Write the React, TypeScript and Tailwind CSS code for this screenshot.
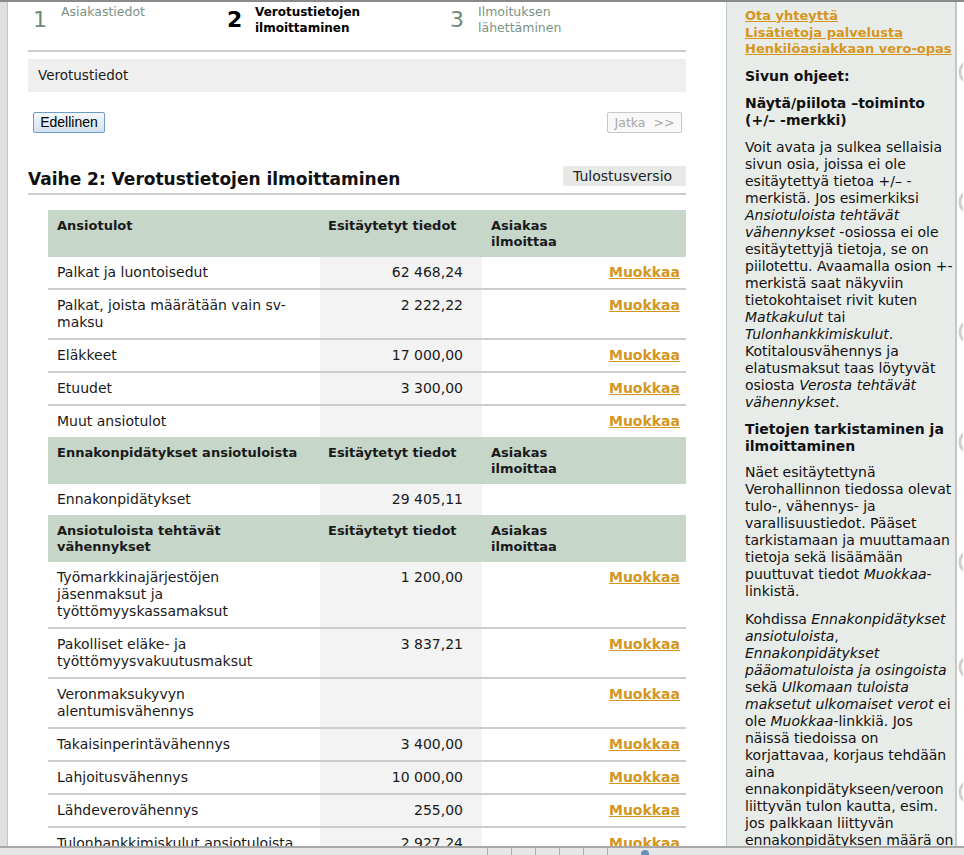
import React from "react";

type Row = { label: string; pre?: string; edit?: boolean };
type Section = { title: string; rows: Row[] };

const sections: Section[] = [
  {
    title: "Ansiotulot",
    rows: [
      { label: "Palkat ja luontoisedut", pre: "62 468,24", edit: true },
      { label: "Palkat, joista määrätään vain sv-maksu", pre: "2 222,22", edit: true },
      { label: "Eläkkeet", pre: "17 000,00", edit: true },
      { label: "Etuudet", pre: "3 300,00", edit: true },
      { label: "Muut ansiotulot", edit: true },
    ],
  },
  {
    title: "Ennakonpidätykset ansiotuloista",
    rows: [{ label: "Ennakonpidätykset", pre: "29 405,11" }],
  },
  {
    title: "Ansiotuloista tehtävät vähennykset",
    rows: [
      { label: "Työmarkkinajärjestöjen jäsenmaksut ja työttömyyskassamaksut", pre: "1 200,00", edit: true },
      { label: "Pakolliset eläke- ja työttömyysvakuutusmaksut", pre: "3 837,21", edit: true },
      { label: "Veronmaksukyvyn alentumisvähennys", edit: true },
      { label: "Takaisinperintävähennys", pre: "3 400,00", edit: true },
      { label: "Lahjoitusvähennys", pre: "10 000,00", edit: true },
      { label: "Lähdeverovähennys", pre: "255,00", edit: true },
      { label: "Tulonhankkimiskulut ansiotuloista", pre: "2 927,24", edit: true },
      { label: "Matkakulut", pre: "", edit: true },
    ],
  },
];

function Link({ children }: { children: React.ReactNode }) {
  return (
    <a href="#" className="font-bold underline text-[#d6961e]">
      {children}
    </a>
  );
}

function Table() {
  return (
    <div className="ml-[20px] mt-[15px] w-[638px] text-[#1a1a1a]">
      {sections.map((s, si) => (
        <div key={si}>
          <div className="grid grid-cols-[272px_162px_204px] bg-[#c6d6c9] text-[13px] font-bold leading-[16px]">
            <div className="pl-[9px] pr-[20px] pt-[8px] pb-[7px]">{s.title}</div>
            <div className="pl-[8px] pt-[8px] pb-[7px]">Esitäytetyt tiedot</div>
            <div className="pl-[9px] pt-[8px] pb-[7px]">
              Asiakas
              <br />
              ilmoittaa
            </div>
          </div>
          {s.rows.map((r, ri) => (
            <div
              key={ri}
              className={
                ri > 0
                  ? "grid grid-cols-[272px_162px_204px] border-t-2 border-[#c9d0cc] text-[14px] leading-[17px]"
                  : "grid grid-cols-[272px_162px_204px] text-[14px] leading-[17px]"
              }
            >
              <div className="pl-[9px] pr-[20px] py-[7px]">{r.label}</div>
              <div className="bg-[#f3f3f3] text-right pr-[19px] py-[7px]">{r.pre}</div>
              <div className="text-right pr-[6px] py-[7px]">{r.edit && <Link>Muokkaa</Link>}</div>
            </div>
          ))}
        </div>
      ))}
    </div>
  );
}

function Steps() {
  return (
    <div className="flex h-[48px] pl-[5px]">
      <div className="flex w-[194px]">
        <div className="w-[28px] text-[22px] leading-[22px] mt-[7px] text-[#6e8b76]">1</div>
        <div className="text-[12.5px] leading-[16px] mt-[2px] text-[#7b9383]">Asiakastiedot</div>
      </div>
      <div className="flex w-[223px]">
        <div className="w-[28px] text-[22px] leading-[22px] mt-[7px] font-bold text-black">2</div>
        <div className="text-[12px] leading-[16px] mt-[2px] font-bold text-black">
          Verotustietojen
          <br />
          ilmoittaminen
        </div>
      </div>
      <div className="flex">
        <div className="w-[28px] text-[22px] leading-[22px] mt-[7px] text-[#6e8b76]">3</div>
        <div className="text-[12.5px] leading-[16px] mt-[2px] text-[#7b9383]">
          Ilmoituksen
          <br />
          lähettäminen
        </div>
      </div>
    </div>
  );
}

function Sidebar() {
  return (
    <aside className="w-[231px] shrink-0 bg-[#e8ece8] border-l border-[#c4c8c5] border-r-2 border-r-[#c6c6c6] pl-[18px] pt-[6px] text-[#111] overflow-hidden">
      <div className="w-[210px]">
        <div className="text-[13px] leading-[16.5px] flex flex-col items-start">
          <Link>Ota yhteyttä</Link>
          <Link>Lisätietoja palvelusta</Link>
          <Link>Henkilöasiakkaan vero-opas</Link>
        </div>
        <h3 className="mt-[10px] text-[14px] leading-[17px] font-bold">Sivun ohjeet:</h3>
        <h3 className="mt-[10px] text-[14px] leading-[17px] font-bold">
          Näytä/piilota –toiminto (+/– -merkki)
        </h3>
        <p className="mt-[10px] text-[14px] leading-[17px]">
          Voit avata ja sulkea sellaisia sivun osia, joissa ei ole esitäytettyä tietoa +/– -<wbr />
          merkistä. Jos esimerkiksi <i>Ansiotuloista tehtävät vähennykset</i> -osiossa ei ole
          esitäytettyjä tietoja, se on piilotettu. Avaamalla osion +-<wbr />merkistä saat näkyviin
          tietokohtaiset rivit kuten <i>Matkakulut</i> tai <i>Tulonhankkimiskulut</i>.
          Kotitalousvähennys ja elatusmaksut taas löytyvät osiosta{" "}
          <i>Verosta tehtävät vähennykset</i>.
        </p>
        <h3 className="mt-[10px] text-[14px] leading-[17px] font-bold">
          Tietojen tarkistaminen ja ilmoittaminen
        </h3>
        <p className="mt-[9px] text-[14px] leading-[17px]">
          Näet esitäytettynä Verohallinnon tiedossa olevat tulo-, vähennys- ja varallisuustiedot.
          Pääset tarkistamaan ja muuttamaan tietoja sekä lisäämään puuttuvat tiedot{" "}
          <i>Muokkaa</i>-linkistä.
        </p>
        <p className="mt-[11px] text-[14px] leading-[17px]">
          Kohdissa <i>Ennakonpidätykset ansiotuloista</i>,{" "}
          <i>Ennakonpidätykset pääomatuloista ja osingoista</i> sekä{" "}
          <i>Ulkomaan tuloista maksetut ulkomaiset verot</i> ei ole <i>Muokkaa</i>-linkkiä. Jos
          näissä tiedoissa on korjattavaa, korjaus tehdään aina ennakonpidätykseen/veroon
          liittyvän tulon kautta, esim. jos palkkaan liittyvän ennakonpidätyksen määrä on
          virheellinen, korjaa palkan tiedot.
        </p>
      </div>
    </aside>
  );
}

export default function App() {
  return (
    <div className="h-[855px] w-[964px] overflow-hidden flex flex-col bg-white font-['DejaVu_Sans',sans-serif]">
      <div className="h-[2px] shrink-0 bg-[#8a8a8a]" />
      <div className="flex flex-1 min-h-0">
        <div className="w-[8px] shrink-0 bg-[#e0e0e0] border-r border-[#c4c4c4]" />
        <main className="w-[718px] shrink-0 pl-[20px] pr-[40px] overflow-hidden">
          <Steps />
          <div className="border-t-2 border-[#c9d0cc]" />
          <div className="mt-[7px] h-[33px] bg-[#efefef] pl-[10px] flex items-center text-[13.5px] text-[#1a1a1a]">
            Verotustiedot
          </div>
          <div className="mt-[20px] flex justify-between items-start">
            <button className="ml-[5px] h-[21px] w-[72px] rounded-[2px] border border-[#6f9cc6] bg-gradient-to-b from-[#f4f8fb] to-[#d3e2ef] text-[14px] leading-[19px] text-black font-['Liberation_Sans',sans-serif]">
              Edellinen
            </button>
            <button className="mr-[4px] h-[21px] w-[75px] rounded-[2px] border border-[#c8c8c8] bg-[#f8f8f8] text-[12.5px] leading-[19px] text-[#a8a8a8]">
              Jatka&nbsp;&nbsp;&gt;&gt;
            </button>
          </div>
          <div className="mt-[33px] h-[27px] flex justify-between items-start">
            <h1 className="mt-[2px] text-[17px] leading-[22px] font-bold text-[#111]">
              Vaihe 2: Verotustietojen ilmoittaminen
            </h1>
            <div className="h-[20px] w-[123px] bg-[#e6e9e6] pl-[10px] text-[14px] leading-[20px] text-[#222]">
              Tulostusversio
            </div>
          </div>
          <div className="border-t-2 border-[#c9d0cc]" />
          <Table />
        </main>
        <Sidebar />
        <div className="flex-1 bg-white overflow-hidden">
          <svg width="6" height="850" viewBox="0 0 6 850">
            {[70, 200, 330, 440, 560, 665, 790].map((y) => (
              <circle key={y} cx="14" cy={y} r="11" fill="none" stroke="#cfcfcf" strokeWidth="3" />
            ))}
          </svg>
        </div>
      </div>
      <div className="h-[9px] shrink-0 border-t-2 border-[#a8a8a8] bg-[#e6e6e6] flex">
        <div className="w-[487px]" />
        {[0, 1, 2, 3, 4, 5].map((i) => (
          <div key={i} className="w-[24px] border-l border-[#b0b0b0]" />
        ))}
        <div className="ml-[10px] mt-[2px] h-[6px] w-[8px] rounded-t-full bg-[#6a8fb8]" />
      </div>
    </div>
  );
}
